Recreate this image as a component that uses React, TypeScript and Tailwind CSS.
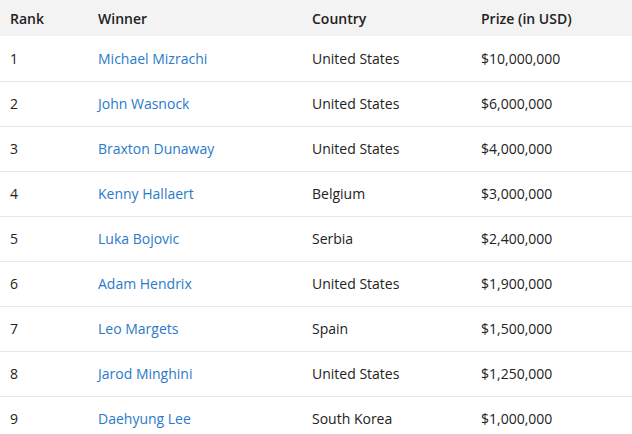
const rows = [
  ['1', 'Michael Mizrachi', 'United States', '$10,000,000'],
  ['2', 'John Wasnock', 'United States', '$6,000,000'],
  ['3', 'Braxton Dunaway', 'United States', '$4,000,000'],
  ['4', 'Kenny Hallaert', 'Belgium', '$3,000,000'],
  ['5', 'Luka Bojovic', 'Serbia', '$2,400,000'],
  ['6', 'Adam Hendrix', 'United States', '$1,900,000'],
  ['7', 'Leo Margets', 'Spain', '$1,500,000'],
  ['8', 'Jarod Minghini', 'United States', '$1,250,000'],
  ['9', 'Daehyung Lee', 'South Korea', '$1,000,000'],
];

export default function App() {
  return (
    <div className="w-[632px] bg-white text-[14px] text-[#222] font-['Open_Sans',sans-serif]">
      <table className="w-full border-collapse">
        <thead>
          <tr className="bg-[#f3f3f3] h-[36px] text-left font-semibold">
            <th className="w-[88px] pl-[10px] font-semibold">Rank</th>
            <th className="w-[214px] pl-[10px] font-semibold">Winner</th>
            <th className="w-[169px] pl-[10px] font-semibold">Country</th>
            <th className="pl-[10px] font-semibold">Prize (in USD)</th>
          </tr>
        </thead>
        <tbody>
          {rows.map(r => (
            <tr key={r[0]} className="h-[45px] border-b border-[#e6e6e6]">
              <td className="pl-[10px]">{r[0]}</td>
              <td className="pl-[10px]">
                <a href="#" className="text-[#2a7ac9]">{r[1]}</a>
              </td>
              <td className="pl-[10px]">{r[2]}</td>
              <td className="pl-[10px]">{r[3]}</td>
            </tr>
          ))}
        </tbody>
      </table>
    </div>
  );
}
